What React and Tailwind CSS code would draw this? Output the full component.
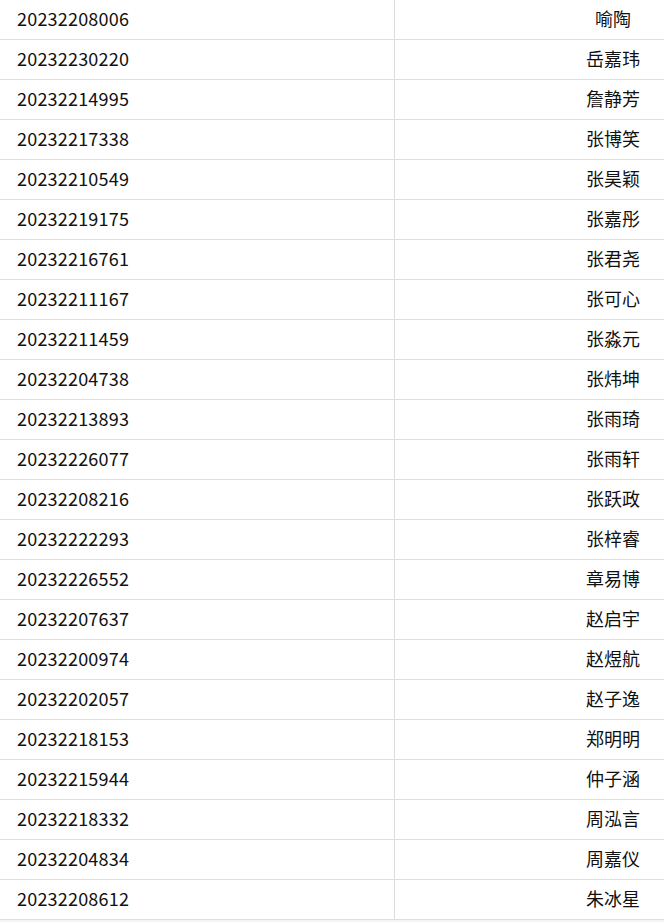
const rows = [
  ['20232208006', '喻陶'],
  ['20232230220', '岳嘉玮'],
  ['20232214995', '詹静芳'],
  ['20232217338', '张博笑'],
  ['20232210549', '张昊颖'],
  ['20232219175', '张嘉彤'],
  ['20232216761', '张君尧'],
  ['20232211167', '张可心'],
  ['20232211459', '张淼元'],
  ['20232204738', '张炜坤'],
  ['20232213893', '张雨琦'],
  ['20232226077', '张雨轩'],
  ['20232208216', '张跃政'],
  ['20232222293', '张梓睿'],
  ['20232226552', '章易博'],
  ['20232207637', '赵启宇'],
  ['20232200974', '赵煜航'],
  ['20232202057', '赵子逸'],
  ['20232218153', '郑明明'],
  ['20232215944', '仲子涵'],
  ['20232218332', '周泓言'],
  ['20232204834', '周嘉仪'],
  ['20232208612', '朱冰星'],
]

export default function App() {
  return (
    <div
      className="w-[664px] h-[922px] overflow-hidden bg-white text-[18px] text-[#111]"
      style={{ fontFamily: '"Noto Sans CJK SC", "Noto Sans", sans-serif' }}
    >
      {rows.map(([id, name], i) => (
        <div key={id} className="flex h-10 border-b border-[#dedede]">
          <div className="w-[395px] border-r border-[#dcdcdc] pl-[17px] pb-[3px] flex items-center leading-none tracking-[0.2px]">
            {id}
          </div>
          <div
            className={
              'flex-1 flex items-center justify-end pb-[3px] leading-none ' + (i === 0 ? 'pr-[33px]' : 'pr-[24px]')
            }
          >
            {name}
          </div>
        </div>
      ))}
      <div className="h-10 bg-[#f3f5f9]" />
    </div>
  )
}
